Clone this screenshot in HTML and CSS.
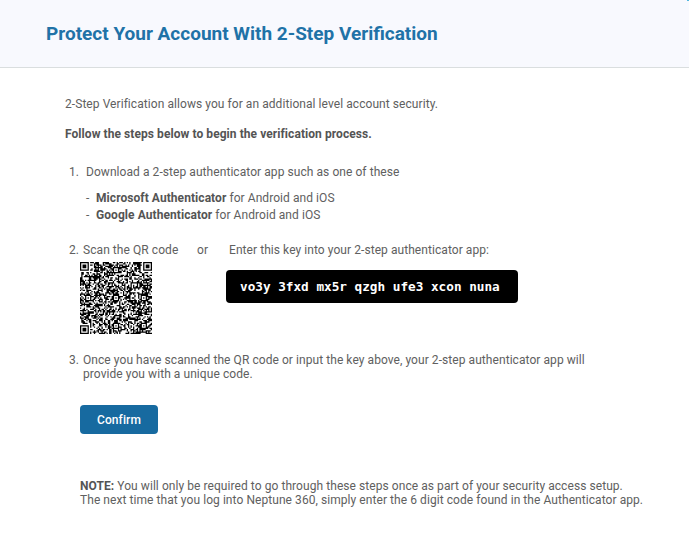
FILE: index.html
```
<!DOCTYPE html>
<html lang="en">
<head>
<meta charset="utf-8">
<title>2-Step Verification</title>
<link rel="stylesheet" href="styles.css">
</head>
<body>
<header class="header"><h1 class="title">Protect Your Account With 2-Step Verification</h1><span class="corner"></span></header>
<main class="content">
<p class="intro">2-Step Verification allows you for an additional level account security.</p>
<p class="follow"><b>Follow the steps below to begin the verification process.</b></p>
<section class="step one"><span class="num">1.</span><span>Download a 2-step authenticator app such as one of these</span></section>
<ul class="apps">
<li><span class="dash">-</span><span><b>Microsoft Authenticator</b> for Android and iOS</span></li>
<li><span class="dash">-</span><span><b>Google Authenticator</b> for Android and iOS</span></li>
</ul>
<section class="scan">
<div class="scan-left"><div class="step"><span class="num">2.</span><span>Scan the QR code</span></div>
<svg class="qr" viewBox="0 0 57 57" role="img" aria-label="QR code"><path id="modules" fill="#000"/></svg></div>
<span class="or">or</span>
<div class="key"><p>Enter this key into your 2-step authenticator app:</p><code class="code">vo3y 3fxd mx5r qzgh ufe3 xcon nuna</code></div>
</section>
<section class="step three"><span class="num">3.</span><span>Once you have scanned the QR code or input the key above, your 2-step authenticator app will<br>provide you with a unique code.</span></section>
<button class="confirm">Confirm</button>
<p class="note"><b>NOTE:</b> You will only be required to go through these steps once as part of your security access setup.<br>The next time that you log into Neptune 360, simply enter the 6 digit code found in the Authenticator app.</p>
</main>
<script src="script.js"></script>
</body>
</html>
```
FILE: styles.css
```
* { box-sizing: border-box; }
body { margin: 0; background: #fff; color: #606060; font: 12px/14px Roboto, sans-serif; letter-spacing: 0.065px; overflow: hidden; }
p, h1, ul { margin: 0; padding: 0; }
b { font-weight: 700; color: #545454; }
.header { position: relative; height: 68px; padding: 22px 46px 0; background: #f8f9fe; border-bottom: 1px solid #dadedf; }
.title { font-size: 19px; line-height: 24px; font-weight: 700; letter-spacing: 0; color: #2072a7; white-space: nowrap; }
.corner { position: absolute; top: 0; right: 0; width: 2px; height: 1px; background: #54b7df; }
.content { padding: 29px 0 0 65px; white-space: nowrap; }
.follow { margin-top: 16px; }
.step { display: flex; }
.step .num { width: 14px; flex: none; }
.one { margin: 24px 0 0 4px; }
.one .num { width: 17px; }
.apps { list-style: none; margin: 10px 0 0 21px; line-height: 18px; }
.apps li { height: 17px; display: flex; }
.dash { width: 10px; }
.scan { display: flex; margin: 20px 0 0 4px; height: 91px; }
.scan-left { width: 128px; }
.qr { display: block; width: 72px; height: 72px; margin: 5px 0 0 11px; }
.or { width: 32px; }
.code { display: block; width: 292px; height: 33px; margin: 13px 0 0 -3px; padding-left: 14px; border-radius: 4px; background: #000; color: #fff; font: bold 12.7px/33px "DejaVu Sans Mono", monospace; letter-spacing: 0; }
.three { margin: 19px 0 0 4px; }
.confirm { display: block; width: 78px; height: 29px; margin: 24px 0 0 15px; padding: 0; border: 0; border-radius: 4px; background: #176aa0; color: #fff; font: 500 12px/30px Roboto, sans-serif; letter-spacing: 0.1px; }
.note { margin: 45px 0 0 15px; }
```
FILE: script.js
```
// Builds the module grid of the QR symbol.
const size = 57;
let seed = 360;
const random = () => (seed = (seed * 16807) % 2147483647) / 2147483647;
const square = (x, y, left, top, span) => {
  const dx = x - left, dy = y - top;
  if (dx < 0 || dy < 0 || dx >= span || dy >= span) return null;
  const ring = Math.min(dx, dy, span - 1 - dx, span - 1 - dy);
  return span === 9 ? ring !== 0 && ring !== 2 : ring !== 1;
};
let path = "";
for (let y = 0; y < size; y++) {
  for (let x = 0; x < size; x++) {
    let on = random() < 0.55;
    for (const [left, top, span] of [[26, 4, 5], [4, 26, 5], [26, 26, 5], [48, 26, 5], [26, 48, 5], [48, 48, 5], [-1, -1, 9], [49, -1, 9], [-1, 49, 9]]) {
      const value = square(x, y, left, top, span);
      if (value !== null) on = value;
    }
    if (on) path += `M${x} ${y}h1v1h-1z`;
  }
}
document.getElementById("modules").setAttribute("d", path);
```
